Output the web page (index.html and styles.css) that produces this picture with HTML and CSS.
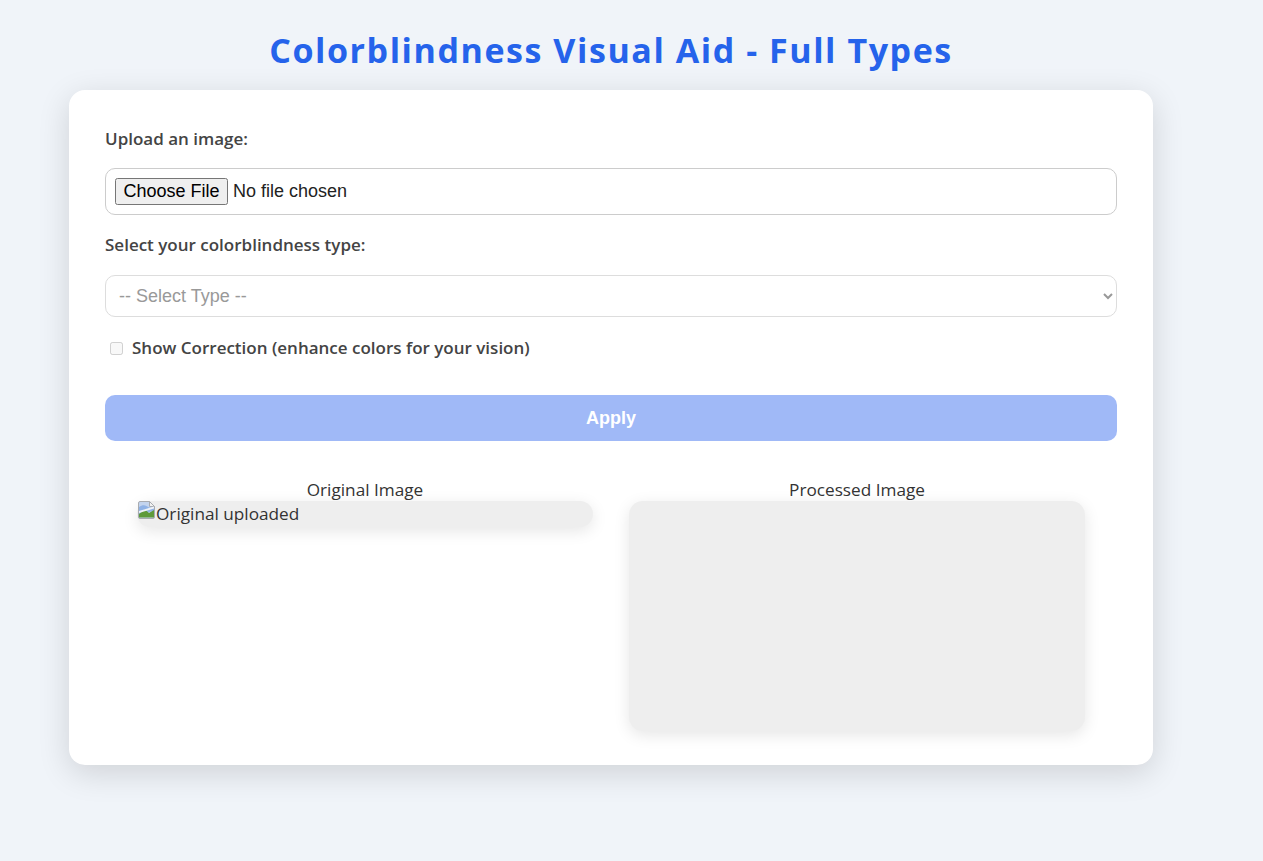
FILE: index.html
```html
<!DOCTYPE html>
<html lang="en">
<head>
<meta charset="utf-8">
<title>Colorblindness Visual Aid - Full Types</title>
<link rel="stylesheet" href="styles.css">
</head>
<body>
<h1 class="title">Colorblindness Visual Aid - Full Types</h1>
<main class="card">
  <label class="label label-first" for="file">Upload an image:</label>
  <input class="field file" id="file" type="file">
  <label class="label" for="type">Select your colorblindness type:</label>
  <select class="field select" id="type" disabled>
    <option>-- Select Type --</option>
  </select>
  <label class="check">
    <input class="checkbox" type="checkbox" disabled>
    <span>Show Correction (enhance colors for your vision)</span>
  </label>
  <button class="apply" type="button">Apply</button>
  <section class="images">
    <figure class="col">
      <figcaption class="caption">Original Image</figcaption>
      <div class="pic pic-broken">
        <svg class="broken" viewBox="0 0 19 18" width="19" height="18" aria-hidden="true">
          <path d="M3 .5H12.5L17.5 5.5V16A1.5 1.5 0 0 1 16 17.500H3A1.500 1.500 0 0 1 1.500 16V2A1.500 1.500 0 0 1 3 .5Z" fill="#c3d4ee" stroke="#a8abb0"/>
          <path d="M12.500 .5V5.500H17.500Z" fill="#f2f2f2" stroke="#a8abb0"/>
          <path d="M2 6C6 3 9 4 12 6.500H17V10L2 13Z" fill="#8fb2e6"/>
          <path d="M2 16.500V13L8 8.500L12 12L17 9V16.500Z" fill="#5e9a3a"/>
          <path d="M2 10L17 5.500V7.500L2 12Z" fill="#eef2f7"/>
        </svg><span>Original uploaded</span>
      </div>
    </figure>
    <figure class="col">
      <figcaption class="caption">Processed Image</figcaption>
      <div class="pic pic-empty"></div>
    </figure>
  </section>
</main>
</body>
</html>
```
FILE: styles.css
```css
* { box-sizing: border-box; }

html, body { margin: 0; }

body {
  min-height: 861px;
  padding: 0 41px 0 0;
  background: #f0f4f9;
  color: #333;
  font-family: "Open Sans", "Noto Sans", sans-serif;
}

.title {
  margin: 0;
  padding-top: 28px;
  height: 90px;
  text-align: center;
  font-size: 34px;
  line-height: 44px;
  font-weight: 700;
  letter-spacing: 1.56px;
  color: #2563eb;
}

.card {
  width: 1084px;
  height: 675px;
  margin: 0 auto;
  padding: 36px;
  background: #fff;
  border-radius: 16px;
  box-shadow: 0 8px 32px rgba(0, 0, 0, 0.14);
}

.label {
  display: block;
  height: 24px;
  line-height: 24px;
  font-size: 17px;
  font-weight: 600;
  color: #444;
}

.label-first {
  height: 25px;
  padding-top: 1px;
}

.field {
  display: block;
  width: 100%;
  background: #fff;
  border: 1px solid #ccc;
  border-radius: 10px;
  font-family: "Liberation Sans", Arial, sans-serif;
  font-size: 18px;
}

.file {
  height: 47px;
  margin: 17px 0 18px;
  padding: 9px;
  color: #222;
}

.file::file-selector-button {
  margin-right: 5px;
  padding: 1px 6.5px;
}

.select {
  height: 42px;
  margin-top: 18px;
  padding: 0 9px;
  border-color: #ddd;
  color: #999;
  opacity: 1;
}

.check {
  display: flex;
  align-items: center;
  height: 24px;
  margin-top: 18px;
  font-size: 17px;
  font-weight: 600;
  color: #444;
}

.checkbox {
  width: 13px;
  height: 13px;
  margin: 2px 9px 0 5px;
}

.apply {
  display: block;
  width: 100%;
  height: 46px;
  margin-top: 36px;
  background: #a0b9f7;
  border: 0;
  border-radius: 10px;
  color: #fff;
  font-family: "Liberation Sans", Arial, sans-serif;
  font-size: 18px;
  font-weight: 700;
}

.images {
  display: flex;
  gap: 36px;
  margin-top: 38px;
  padding: 0 32px;
}

.col {
  flex: 1 1 0;
  margin: 0;
}

.caption {
  height: 22px;
  line-height: 22px;
  text-align: center;
  font-size: 17.2px;
  color: #333;
}

.pic {
  background: #eee;
  border-radius: 14px;
  box-shadow: 0 4px 16px rgba(0, 0, 0, 0.1);
}

.pic-broken {
  display: flex;
  align-items: flex-start;
  height: 26px;
  line-height: 26px;
  font-size: 17.2px;
}

.broken { flex: none; }

.pic-empty { height: 230px; }
```
